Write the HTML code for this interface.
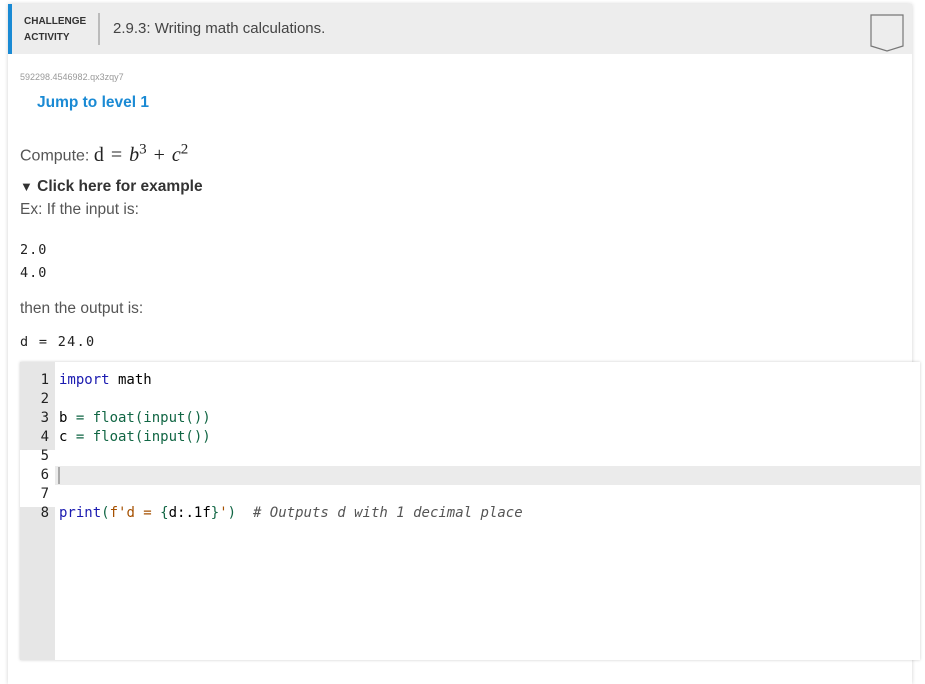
<!DOCTYPE html>
<html><head><style>
body{margin:0;background:#fff;width:925px;height:671px;overflow:hidden;font-family:"Liberation Sans",sans-serif;position:relative}
.card{position:absolute;left:8px;top:4px;width:904px;height:680px;background:#fff;box-shadow:0 0 4px rgba(0,0,0,.18)}
.hdr{position:absolute;left:0;top:0;width:904px;height:50px;background:#ededed}
.bar{position:absolute;left:0;top:0;width:4px;height:50px;background:#1a8ad4}
.ch{position:absolute;left:16px;top:10px;font-size:10px;font-weight:bold;color:#333;line-height:16px}
.sep{position:absolute;left:90px;top:9px;width:2px;height:32px;background:#bbb}
.ttl{position:absolute;left:105px;top:16px;font-size:15px;color:#444}
.abs{position:absolute}
.mono{font-family:"DejaVu Sans Mono",monospace}
.ed{position:absolute;left:20px;top:362px;width:900px;height:298px;background:#fff;box-shadow:0 0 3px rgba(0,0,0,.2)}
.gut{position:absolute;left:0;top:0;width:35px;height:298px;background:#e6e6e6}
.ln{position:absolute;left:0;width:900px;height:19px;font-family:"DejaVu Sans Mono",monospace;font-size:14px;line-height:19px;color:#000}
.ln .n{display:inline-block;width:29px;text-align:right;color:#222}
.ln .c{position:absolute;left:39px;white-space:pre}
.kw{color:#1a1ab0}.gr{color:#116644}.st{color:#a55000}.cm{color:#555;font-style:italic}
</style></head><body>
<div class="card">
<div class="hdr"><div class="bar"></div><div class="ch">CHALLENGE<br>ACTIVITY</div><div class="sep"></div><div class="ttl">2.9.3: Writing math calculations.</div>
<svg class="abs" style="left:862px;top:10px" width="34" height="39"><path d="M1 1H33V32L17 37L1 32Z" fill="none" stroke="#777" stroke-width="1.2"/></svg></div>
<div class="abs" style="left:12px;top:68px;font-size:9px;color:#999">592298.4546982.qx3zqy7</div>
<div class="abs" style="left:29px;top:90px;font-size:15.5px;font-weight:bold;color:#1a8ad4">Jump to level 1</div>
<div class="abs" style="left:12px;top:137px;font-size:16px;color:#555">Compute: <span style="font-family:'Liberation Serif',serif;font-size:20px;color:#222;word-spacing:2px">d = <i>b</i><sup style="font-size:15px">3</sup> + <i>c</i><sup style="font-size:15px">2</sup></span></div>
<div class="abs" style="left:12px;top:174px;font-size:15.5px;font-weight:bold;color:#333"><span style="font-size:13px">▼</span> Click here for example</div>
<div class="abs" style="left:12px;top:197px;font-size:15.5px;color:#555">Ex: If the input is:</div>
<div class="abs mono" style="left:12px;top:235px;font-size:13.5px;line-height:23px;color:#222;letter-spacing:1px">2.0<br>4.0</div>
<div class="abs" style="left:12px;top:296px;font-size:15.5px;color:#555">then the output is:</div>
<div class="abs mono" style="left:12px;top:330px;font-size:13.5px;color:#222;letter-spacing:1.3px">d = 24.0</div>
</div>
<div class="ed">
<div class="gut"></div>
<div class="abs" style="left:0;top:88px;width:35px;height:57px;background:#fff"></div>
<div class="abs" style="left:35px;top:104px;width:865px;height:19px;background:#ebebeb"></div>
<div class="abs" style="left:38px;top:105px;width:2px;height:17px;background:#aaa"></div>
<div class="ln" style="top:9px"><span class="n">1</span><span class="c"><span class="kw">import</span> math</span></div>
<div class="ln" style="top:28px"><span class="n">2</span></div>
<div class="ln" style="top:47px"><span class="n">3</span><span class="c">b <span class="gr">= float(input())</span></span></div>
<div class="ln" style="top:66px"><span class="n">4</span><span class="c">c <span class="gr">= float(input())</span></span></div>
<div class="ln" style="top:85px"><span class="n">5</span></div>
<div class="ln" style="top:104px"><span class="n">6</span></div>
<div class="ln" style="top:123px"><span class="n">7</span></div>
<div class="ln" style="top:142px"><span class="n">8</span><span class="c"><span class="kw">print</span><span class="gr">(</span><span class="st">f'd = </span><span class="gr">{</span>d:.1f<span class="gr">}</span><span class="st">'</span><span class="gr">)</span>  <span class="cm"># Outputs d with 1 decimal place</span></span></div>
</div>
</body></html>
